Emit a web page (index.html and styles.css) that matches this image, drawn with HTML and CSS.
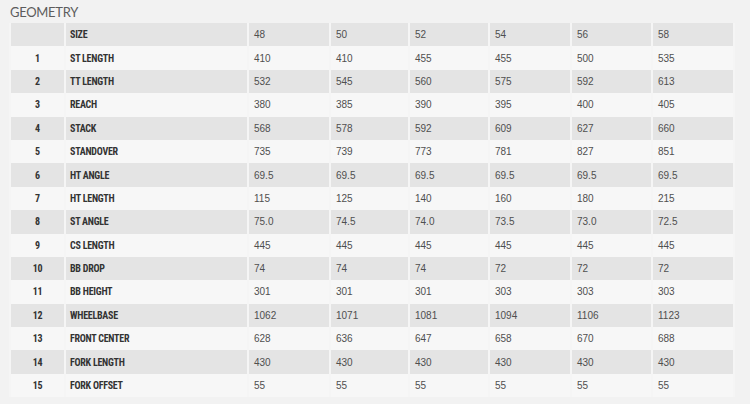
FILE: index.html
```html
<!DOCTYPE html>
<html>
<head>
<meta charset="utf-8">
<link rel="stylesheet" href="styles.css">
</head>
<body>
<h2 class="title">GEOMETRY</h2>
<table class="geo">
  <colgroup>
    <col class="c-num"><col class="c-label"><col class="c-v1"><col class="c-v2"><col class="c-v3"><col class="c-v4"><col class="c-v5"><col class="c-v6">
  </colgroup>
  <tr><td class="num"></td><td class="label">SIZE</td><td>48</td><td>50</td><td>52</td><td>54</td><td>56</td><td>58</td></tr>
  <tr><td class="num">1</td><td class="label">ST LENGTH</td><td>410</td><td>410</td><td>455</td><td>455</td><td>500</td><td>535</td></tr>
  <tr><td class="num">2</td><td class="label">TT LENGTH</td><td>532</td><td>545</td><td>560</td><td>575</td><td>592</td><td>613</td></tr>
  <tr><td class="num">3</td><td class="label">REACH</td><td>380</td><td>385</td><td>390</td><td>395</td><td>400</td><td>405</td></tr>
  <tr><td class="num">4</td><td class="label">STACK</td><td>568</td><td>578</td><td>592</td><td>609</td><td>627</td><td>660</td></tr>
  <tr><td class="num">5</td><td class="label">STANDOVER</td><td>735</td><td>739</td><td>773</td><td>781</td><td>827</td><td>851</td></tr>
  <tr><td class="num">6</td><td class="label">HT ANGLE</td><td>69.5</td><td>69.5</td><td>69.5</td><td>69.5</td><td>69.5</td><td>69.5</td></tr>
  <tr><td class="num">7</td><td class="label">HT LENGTH</td><td>115</td><td>125</td><td>140</td><td>160</td><td>180</td><td>215</td></tr>
  <tr><td class="num">8</td><td class="label">ST ANGLE</td><td>75.0</td><td>74.5</td><td>74.0</td><td>73.5</td><td>73.0</td><td>72.5</td></tr>
  <tr><td class="num">9</td><td class="label">CS LENGTH</td><td>445</td><td>445</td><td>445</td><td>445</td><td>445</td><td>445</td></tr>
  <tr><td class="num">10</td><td class="label">BB DROP</td><td>74</td><td>74</td><td>74</td><td>72</td><td>72</td><td>72</td></tr>
  <tr><td class="num">11</td><td class="label">BB HEIGHT</td><td>301</td><td>301</td><td>301</td><td>303</td><td>303</td><td>303</td></tr>
  <tr><td class="num">12</td><td class="label">WHEELBASE</td><td>1062</td><td>1071</td><td>1081</td><td>1094</td><td>1106</td><td>1123</td></tr>
  <tr><td class="num">13</td><td class="label">FRONT CENTER</td><td>628</td><td>636</td><td>647</td><td>658</td><td>670</td><td>688</td></tr>
  <tr><td class="num">14</td><td class="label">FORK LENGTH</td><td>430</td><td>430</td><td>430</td><td>430</td><td>430</td><td>430</td></tr>
  <tr><td class="num">15</td><td class="label">FORK OFFSET</td><td>55</td><td>55</td><td>55</td><td>55</td><td>55</td><td>55</td></tr>
</table>
</body>
</html>
```
FILE: styles.css
```css
html, body {
  margin: 0;
  padding: 0;
  background: #f2f2f2;
}
body {
  font-family: "Liberation Sans", Arial, sans-serif;
}
.title {
  margin: 0;
  padding: 4px 0 0 10px;
  height: 19px;
  font-family: Lato, "Open Sans", sans-serif;
  font-weight: 400;
  font-size: 13px;
  line-height: 16px;
  color: #5c5c5c;
  letter-spacing: -0.3px;
}
.geo {
  margin-left: 9px;
  border-collapse: separate;
  border-spacing: 2px 0;
  table-layout: fixed;
  width: 726px;
  background: #f5f5f5;
}
.c-num { width: 53px; }
.c-label { width: 181px; }
.c-v1 { width: 80px; }
.c-v2 { width: 77px; }
.c-v3 { width: 78px; }
.c-v4 { width: 80px; }
.c-v5 { width: 79px; }
.c-v6 { width: 80px; }
.geo tr {
  height: 23.4px;
}
.geo td {
  padding: 0 0 0 5px;
  font-size: 10px;
  color: #4f4f4f;
  background: #f7f7f7;
  white-space: nowrap;
  vertical-align: middle;
}
.geo tr:nth-child(odd) td {
  background: #e4e4e4;
}
.geo td.num,
.geo td.label {
  font-family: "Liberation Sans Narrow", "Roboto Condensed", "DejaVu Sans Condensed", sans-serif;
  font-stretch: condensed;
  font-weight: 700;
  font-size: 10px;
  letter-spacing: -0.25px;
  color: #333;
}
.geo td.num {
  text-align: center;
  padding: 0;
}
.geo td.label {
  padding-left: 4px;
}
```
